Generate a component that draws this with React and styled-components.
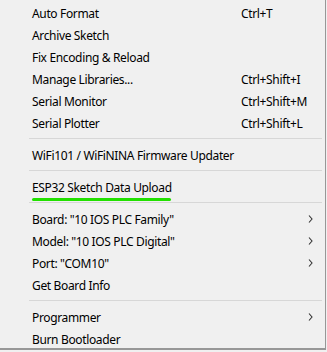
import styled, { createGlobalStyle } from "styled-components";

const Global = createGlobalStyle`
  html, body {
    margin: 0;
    padding: 0;
    background: #f0f0f0;
  }
`;

const Menu = styled.div`
  width: 326px;
  height: 350px;
  padding-top: 2px;
  box-sizing: border-box;
  background: #f0f0f0;
  border-right: 1px solid #979797;
  border-bottom: 2px solid #979797;
  font-family: "Segoe UI", "Noto Sans", "Open Sans", sans-serif;
  font-size: 12px;
  letter-spacing: -0.35px;
  color: #000;
  display: flex;
  flex-direction: column;
`;

const Item = styled.div`
  height: 22px;
  display: grid;
  grid-template-columns: 32px 209px 1fr 10px;
  align-items: center;
  white-space: nowrap;
`;

const Label = styled.span`
  grid-column: 2;
  position: relative;

  ${(p) =>
    p.$marked &&
    `
    &::after {
      content: "";
      position: absolute;
      left: 0;
      top: 19px;
      width: 139px;
      height: 3px;
      border-radius: 2px;
      background: #22e000;
    }
  `}
`;

const Shortcut = styled.span`
  grid-column: 3;
`;

const Arrow = styled.svg`
  grid-column: 3;
  justify-self: end;
  margin-right: 2px;
  width: 5px;
  height: 8px;
`;

const Separator = styled.div`
  height: 10px;
  display: flex;
  align-items: flex-start;
  padding-left: 29px;
  padding-right: 3px;

  &::before {
    content: "";
    display: block;
    margin-top: 4px;
    flex: 1;
    height: 1px;
    background: #d7d7d7;
  }
`;

const groups = [
  [
    { label: "Auto Format", shortcut: "Ctrl+T" },
    { label: "Archive Sketch" },
    { label: "Fix Encoding & Reload" },
    { label: "Manage Libraries...", shortcut: "Ctrl+Shift+I" },
    { label: "Serial Monitor", shortcut: "Ctrl+Shift+M" },
    { label: "Serial Plotter", shortcut: "Ctrl+Shift+L" },
  ],
  [{ label: "WiFi101 / WiFiNINA Firmware Updater" }],
  [{ label: "ESP32 Sketch Data Upload", marked: true }],
  [
    { label: 'Board: "10 IOS PLC Family"', sub: true },
    { label: 'Model: "10 IOS PLC Digital"', sub: true },
    { label: 'Port: "COM10"', sub: true },
    { label: "Get Board Info" },
  ],
  [{ label: "Programmer", sub: true }, { label: "Burn Bootloader" }],
];

function MenuItem({ item }) {
  return (
    <Item>
      <Label $marked={item.marked}>{item.label}</Label>
      {item.shortcut && <Shortcut>{item.shortcut}</Shortcut>}
      {item.sub && (
        <Arrow viewBox="0 0 5 8">
          <path d="M1 0.5 L4 4 L1 7.5" fill="none" stroke="#333" strokeWidth="1.1" />
        </Arrow>
      )}
    </Item>
  );
}

export default function App() {
  return (
    <>
      <Global />
      <Menu>
        {groups.map((group, gi) => (
          <div key={gi}>
            {gi > 0 && <Separator />}
            {group.map((item) => (
              <MenuItem key={item.label} item={item} />
            ))}
          </div>
        ))}
      </Menu>
    </>
  );
}
